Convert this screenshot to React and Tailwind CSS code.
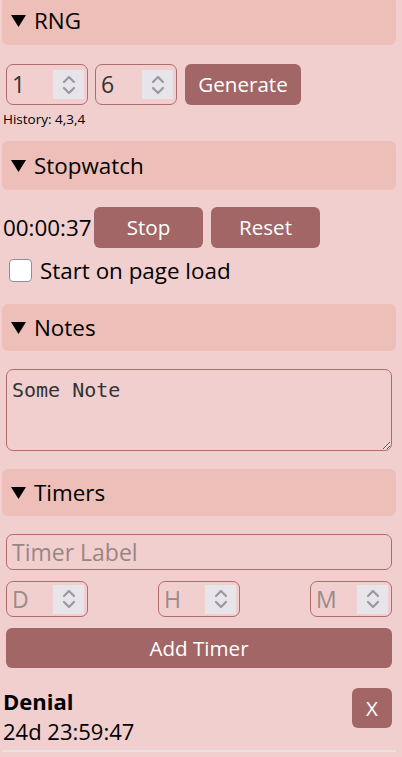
import React, { useState } from 'react';

const Spinner = () => (
  <div className="w-[31px] h-[29px] bg-[#e8e5ea] flex items-center justify-center">
    <svg width="16" height="24" viewBox="0 0 16 24" fill="none" stroke="#9b97a3" strokeWidth="2.2" strokeLinecap="round" strokeLinejoin="round">
      <path d="M3 9 L8 4 L13 9" />
      <path d="M3 15 L8 20 L13 15" />
    </svg>
  </div>
);

const NumberBox = ({ value, placeholder, className = '' }) => (
  <div className={`w-[82px] border border-[#b06b6b] rounded-[7px] flex items-center justify-between pl-[5px] pr-[3px] ${className}`}>
    {value ? (
      <span className="text-[23px] text-[#333]">{value}</span>
    ) : (
      <span className="text-[23px] text-[#9a8a8a]">{placeholder}</span>
    )}
    <Spinner />
  </div>
);

const Header = ({ title, className = '' }) => (
  <div className={`bg-[#eebfb9] rounded-[6px] flex items-center pl-[9px] pr-[9px] text-[22.4px] text-black ${className}`}>
    <svg width="15" height="12" viewBox="0 0 15 12" className="mr-[8px] shrink-0">
      <path d="M0 0 H15 L7.5 12 Z" fill="#000" />
    </svg>
    {title}
  </div>
);

const Btn = ({ children, className = '' }) => (
  <button className={`bg-[#a36666] text-white rounded-[6px] text-[20.6px] ${className}`}>
    {children}
  </button>
);

export default function App() {
  const [checked, setChecked] = useState(false);

  return (
    <div
      className="h-screen bg-[#f1cfcf] pl-[2px] pr-[6px] overflow-hidden"
      style={{ fontFamily: '"Open Sans", "Noto Sans", sans-serif' }}
    >
      {/* RNG */}
      <Header title="RNG" className="-mt-[3px] h-[48px]" />
      <div className="flex items-center gap-[7px] mt-[19px] px-[4px] h-[41px]">
        <NumberBox value="1" className="h-[41px]" />
        <NumberBox value="6" className="h-[41px]" />
        <Btn className="w-[116px] h-[41px] ml-[1px]">Generate</Btn>
      </div>
      <div className="text-[13.5px] text-black mt-[4px] ml-[1px] h-[20px] leading-[20px]">History: 4,3,4</div>

      {/* Stopwatch */}
      <Header title="Stopwatch" className="mt-[12px] h-[49px]" />
      <div className="flex items-center mt-[17px] h-[41px]">
        <span className="text-[22.4px] text-black ml-[1px] w-[91px]">00:00:37</span>
        <Btn className="w-[109px] h-[41px]">Stop</Btn>
        <Btn className="w-[109px] h-[41px] ml-[8px]">Reset</Btn>
      </div>
      <label className="flex items-center mt-[11px] ml-[7px] h-[23px]">
        <input
          type="checkbox"
          checked={checked}
          onChange={() => setChecked(!checked)}
          className="appearance-none w-[23px] h-[23px] bg-white border border-[#8f8f9d] rounded-[4px] shrink-0"
        />
        <span className="text-[22.4px] text-black ml-[8px]">Start on page load</span>
      </label>

      {/* Notes */}
      <Header title="Notes" className="mt-[22px] h-[47px]" />
      <div className="px-[4px] mt-[18px]">
        <textarea
          defaultValue="Some Note"
          className="block w-full h-[82px] border border-[#b06b6b] rounded-[7px] bg-transparent px-[5px] py-[6px] text-[20px] leading-[28px] text-[#333] outline-none"
          style={{ fontFamily: '"DejaVu Sans Mono", monospace' }}
        />
      </div>

      {/* Timers */}
      <Header title="Timers" className="mt-[18px] h-[47px]" />
      <div className="px-[4px] mt-[18px]">
        <div className="h-[36px] border border-[#b06b6b] rounded-[7px] flex items-center px-[5px] text-[23px] text-[#9a8585]">
          Timer Label
        </div>
        <div className="flex justify-between mt-[11px]">
          <NumberBox placeholder="D" className="h-[36px]" />
          <NumberBox placeholder="H" className="h-[36px]" />
          <NumberBox placeholder="M" className="h-[36px]" />
        </div>
        <Btn className="w-full h-[40px] mt-[11px]">Add Timer</Btn>
      </div>

      <div className="flex items-start justify-between mt-[18px] pr-[4px]">
        <div className="ml-[1px]">
          <div className="text-[22px] font-bold text-black leading-[30px]">Denial</div>
          <div className="text-[22px] text-black leading-[30px]">24d 23:59:47</div>
        </div>
        <Btn className="w-[40px] h-[40px] mt-[2px]">X</Btn>
      </div>
      <div className="h-[2px] bg-[#e6e3e3] mt-[4px]" />
    </div>
  );
}
